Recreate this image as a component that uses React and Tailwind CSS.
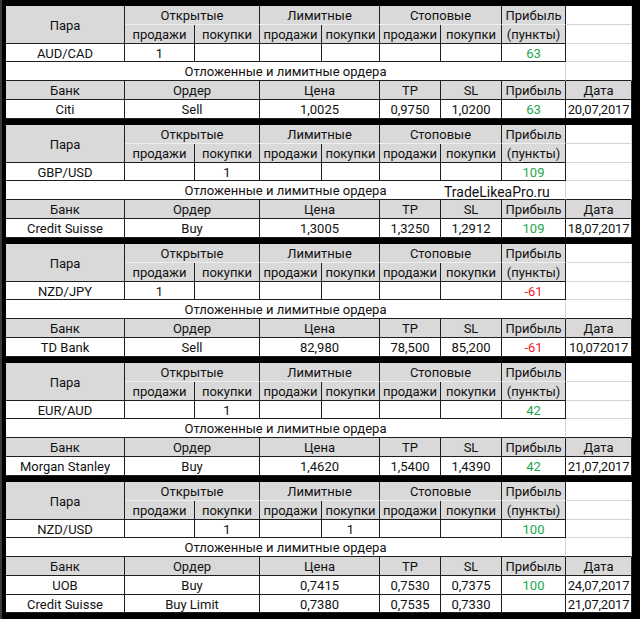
import React from "react";

function Cell({ className = "", children }) {
  return (
    <div
      className={`flex items-center justify-center border-r border-b border-[#1e1e1e] whitespace-nowrap overflow-hidden pt-[2px] ${className}`}
    >
      {children}
    </div>
  );
}

const G = "bg-[#d9d9d9]";

function Block({ pair, open, profit, color, rows, watermark }) {
  const pc = color === "red" ? "text-[#f01c1c]" : "text-[#22a84e]";
  return (
    <div className="relative grid grid-cols-[119px_70px_65px_62px_58px_61px_61px_64px_66px] auto-rows-[18.75px]">
      <Cell className={`row-span-2 ${G}`}>Пара</Cell>
      <Cell className={`col-span-2 ${G} border-b-[#eeeeee]`}>Открытые</Cell>
      <Cell className={`col-span-2 ${G} border-b-[#eeeeee]`}>Лимитные</Cell>
      <Cell className={`col-span-2 ${G} border-b-[#eeeeee]`}>Стоповые</Cell>
      <Cell className={`${G} border-b-[#eeeeee]`}>Прибыль</Cell>
      <Cell className="bg-white border-r-[#d4d4d4] border-b-[#d4d4d4]" />

      <Cell className={G}>продажи</Cell>
      <Cell className={G}>покупки</Cell>
      <Cell className={G}>продажи</Cell>
      <Cell className={G}>покупки</Cell>
      <Cell className={G}>продажи</Cell>
      <Cell className={G}>покупки</Cell>
      <Cell className={G}>(пункты)</Cell>
      <Cell className="bg-white border-r-[#d4d4d4] border-b-[#d4d4d4]" />

      <Cell className="bg-white">{pair}</Cell>
      {open.map((v, i) => (
        <Cell key={i} className="bg-white">
          {v}
        </Cell>
      ))}
      <Cell className={`bg-white ${pc}`}>{profit}</Cell>
      <Cell className="bg-white border-r-[#d4d4d4] border-b-[#d4d4d4]" />

      <Cell className="col-span-8 bg-white border-r-[#d4d4d4]">
        Отложенные и лимитные ордера
      </Cell>
      <Cell className="bg-white border-r-[#d4d4d4]" />

      <Cell className={G}>Банк</Cell>
      <Cell className={`col-span-2 ${G}`}>Ордер</Cell>
      <Cell className={`col-span-2 ${G}`}>Цена</Cell>
      <Cell className={G}>TP</Cell>
      <Cell className={G}>SL</Cell>
      <Cell className={G}>Прибыль</Cell>
      <Cell className={G}>Дата</Cell>

      {rows.map((r, i) => (
        <React.Fragment key={i}>
          <Cell className="bg-white">{r[0]}</Cell>
          <Cell className="col-span-2 bg-white">{r[1]}</Cell>
          <Cell className="col-span-2 bg-white">{r[2]}</Cell>
          <Cell className="bg-white">{r[3]}</Cell>
          <Cell className="bg-white">{r[4]}</Cell>
          <Cell className={`bg-white ${pc}`}>{r[5]}</Cell>
          <Cell className="bg-white tracking-[-0.2px]">{r[6]}</Cell>
        </React.Fragment>
      ))}

      {watermark && (
        <div className="absolute left-[438px] top-[58px] text-[14px] leading-[18px] text-[#111]">
          TradeLikeaPro.ru
        </div>
      )}
    </div>
  );
}

export default function App() {
  const blocks = [
    {
      pair: "AUD/CAD",
      open: ["1", "", "", "", "", ""],
      profit: "63",
      rows: [["Citi", "Sell", "1,0025", "0,9750", "1,0200", "63", "20,07,2017"]],
    },
    {
      pair: "GBP/USD",
      open: ["", "1", "", "", "", ""],
      profit: "109",
      watermark: true,
      rows: [["Credit Suisse", "Buy", "1,3005", "1,3250", "1,2912", "109", "18,07,2017"]],
    },
    {
      pair: "NZD/JPY",
      open: ["1", "", "", "", "", ""],
      profit: "-61",
      color: "red",
      rows: [["TD Bank", "Sell", "82,980", "78,500", "85,200", "-61", "10,072017"]],
    },
    {
      pair: "EUR/AUD",
      open: ["", "1", "", "", "", ""],
      profit: "42",
      rows: [["Morgan Stanley", "Buy", "1,4620", "1,5400", "1,4390", "42", "21,07,2017"]],
    },
    {
      pair: "NZD/USD",
      open: ["", "1", "", "1", "", ""],
      profit: "100",
      rows: [
        ["UOB", "Buy", "0,7415", "0,7530", "0,7375", "100", "24,07,2017"],
        ["Credit Suisse", "Buy Limit", "0,7380", "0,7535", "0,7330", "", "21,07,2017"],
      ],
    },
  ];
  return (
    <div className="w-[640px] h-[619px] bg-black border-l-2 border-[#3a3a3a] pl-[4px] pt-[6px] overflow-hidden font-['Roboto',sans-serif] text-[13px] text-[#111]">
      <div className="flex flex-col gap-[6.5px]">
        {blocks.map((b, i) => (
          <Block key={i} {...b} />
        ))}
      </div>
    </div>
  );
}
